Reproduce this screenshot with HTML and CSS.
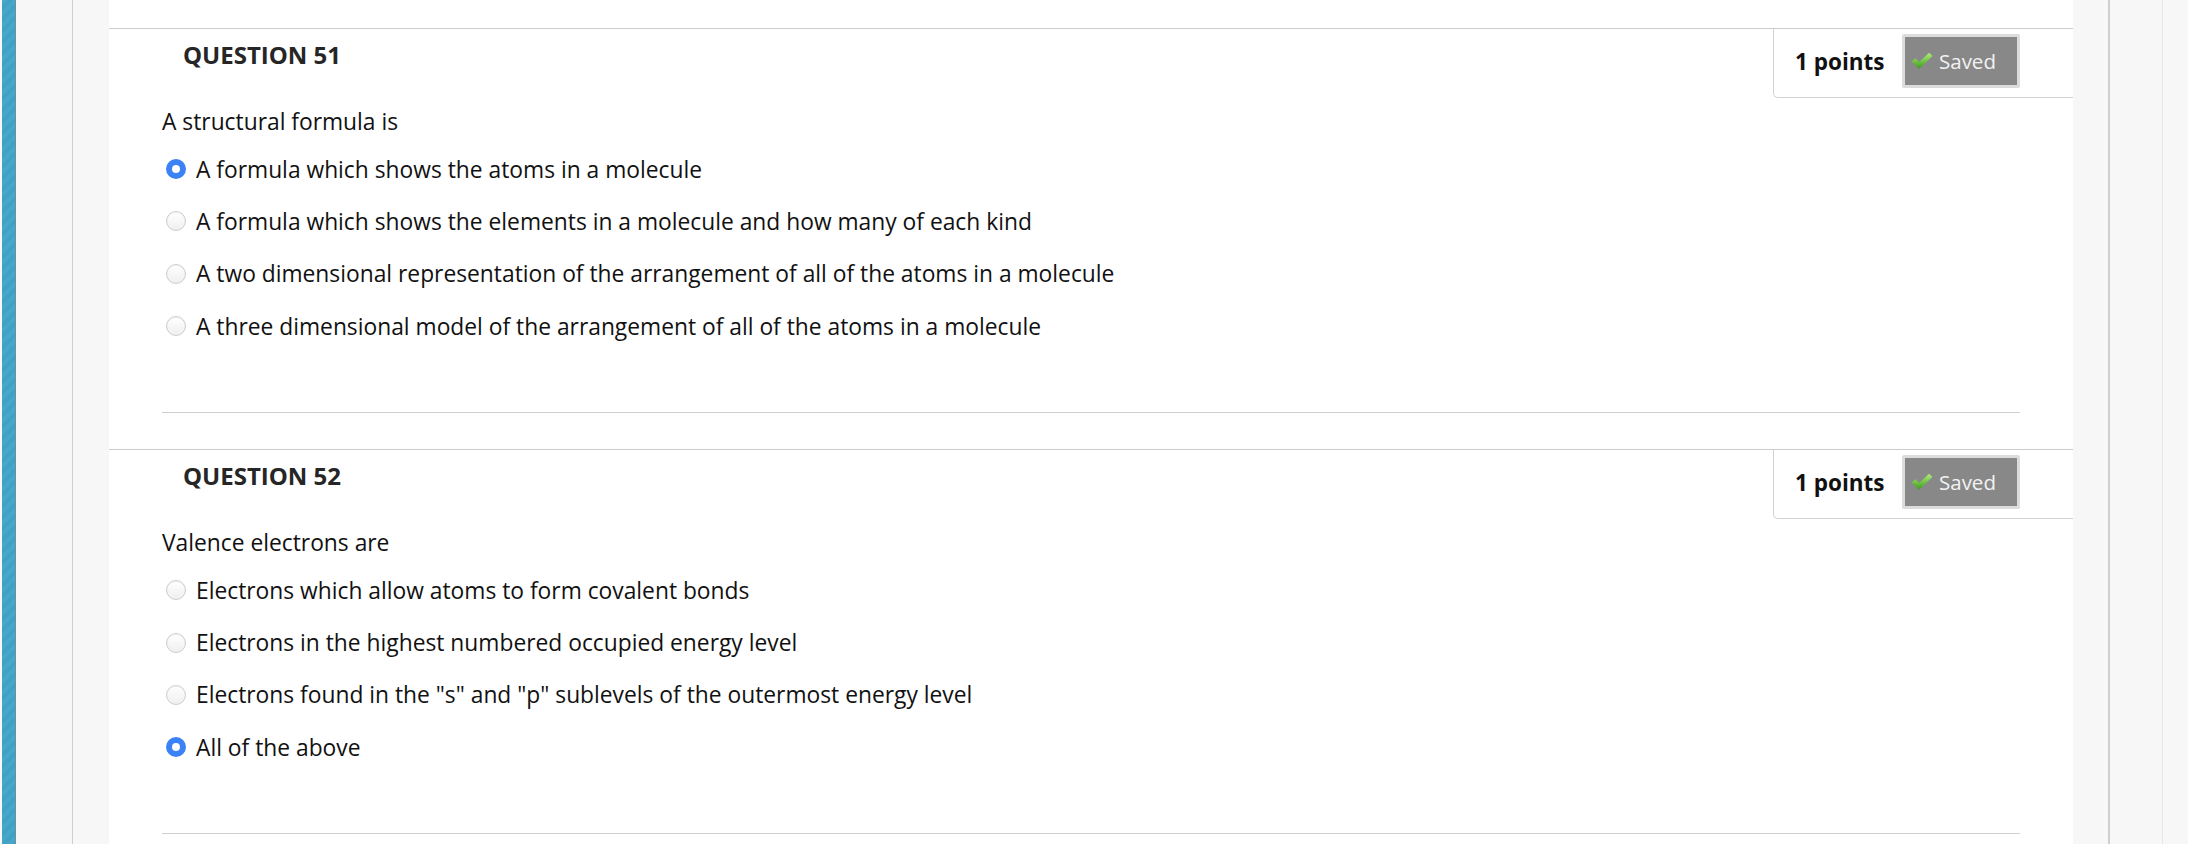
FILE: index.html
```html
<!DOCTYPE html>
<html lang="en">
<head>
<meta charset="utf-8">
<title>Questions</title>
<link rel="stylesheet" href="styles.css">
</head>
<body>
<div class="page">
  <div class="rail"></div>
  <div class="leftpane"><div class="lp-a"></div><div class="lp-b"></div></div>
  <main class="main">
    <section class="question">
      <div class="qhead">
        <h3 class="qtitle">QUESTION 51</h3>
        <div class="points">
          <span class="pts">1 points</span>
          <span class="saved"><svg class="check" viewBox="0 0 20 16" width="22" height="18"><defs><linearGradient id="g1" x1="0" y1="0" x2="0" y2="1"><stop offset="0" stop-color="#b0f07a"/><stop offset="1" stop-color="#3c9b19"/></linearGradient></defs><path d="M0.5 8.5 L4 5.5 L7.5 9 L16.5 0.5 L19.5 3.5 L7.5 15 Z" fill="url(#g1)"/></svg>Saved</span>
        </div>
      </div>
      <div class="qbody">
        <p class="qtext">A structural formula is</p>
        <ul class="options">
          <li class="opt"><span class="radio checked"></span>A formula which shows the atoms in a molecule</li>
          <li class="opt"><span class="radio"></span>A formula which shows the elements in a molecule and how many of each kind</li>
          <li class="opt"><span class="radio"></span>A two dimensional representation of the arrangement of all of the atoms in a molecule</li>
          <li class="opt"><span class="radio"></span>A three dimensional model of the arrangement of all of the atoms in a molecule</li>
        </ul>
        <hr class="sep">
      </div>
    </section>
    <section class="question">
      <div class="qhead">
        <h3 class="qtitle">QUESTION 52</h3>
        <div class="points">
          <span class="pts">1 points</span>
          <span class="saved"><svg class="check" viewBox="0 0 20 16" width="22" height="18"><defs><linearGradient id="g2" x1="0" y1="0" x2="0" y2="1"><stop offset="0" stop-color="#b0f07a"/><stop offset="1" stop-color="#3c9b19"/></linearGradient></defs><path d="M0.5 8.5 L4 5.5 L7.5 9 L16.5 0.5 L19.5 3.5 L7.5 15 Z" fill="url(#g2)"/></svg>Saved</span>
        </div>
      </div>
      <div class="qbody">
        <p class="qtext">Valence electrons are</p>
        <ul class="options">
          <li class="opt"><span class="radio"></span>Electrons which allow atoms to form covalent bonds</li>
          <li class="opt"><span class="radio"></span>Electrons in the highest numbered occupied energy level</li>
          <li class="opt"><span class="radio"></span>Electrons found in the "s" and "p" sublevels of the outermost energy level</li>
          <li class="opt"><span class="radio checked"></span>All of the above</li>
        </ul>
        <hr class="sep">
      </div>
    </section>
  </main>
  <div class="rightpane"><div class="rp-a"></div><div class="rp-b"></div><div class="rp-c"></div></div>
</div>
</body>
</html>
```

FILE: styles.css
```css
html, body {
  margin: 0;
  padding: 0;
  height: 100%;
  overflow: hidden;
}
body {
  font-family: "Open Sans", "Noto Sans", sans-serif;
  color: #111;
  background: #f7f7f7;
}
.page {
  display: flex;
  height: 844px;
  align-items: stretch;
}
.rail {
  width: 14px;
  margin-left: 2px;
  background:
    repeating-linear-gradient(135deg, rgba(255,255,255,0.025) 0 4px, rgba(0,0,0,0.025) 4px 8px),
    #42a5ca;
  border-right: 1px solid #6f8f9b;
  box-sizing: border-box;
}
.leftpane {
  width: 93px;
  display: flex;
  background: #f7f7f7;
}
.lp-a {
  width: 56px;
  border-right: 1px solid #cfcfcf;
}
.lp-b { flex: 1; }
.main {
  flex: 1;
  background: #fff;
  padding-top: 28px;
  min-width: 0;
}
.question {
  border-top: 1px solid #cccccc;
}
.qhead {
  display: flex;
  align-items: flex-start;
}
.qtitle {
  margin: 0;
  padding: 11px 0 0 74px;
  font-size: 24px;
  line-height: 30px;
  font-weight: 700;
  color: #262626;
}
.points {
  margin-left: auto;
  width: 300px;
  height: 69px;
  box-sizing: border-box;
  border-left: 1px solid #d2d2d2;
  border-bottom: 1px solid #d2d2d2;
  border-bottom-left-radius: 5px;
  display: flex;
  align-items: center;
  padding: 0 0 4px 21px;
}
.pts {
  font-size: 22.5px;
  font-weight: 700;
  color: #111;
  width: 107px;
}
.saved {
  display: flex;
  align-items: center;
  gap: 6px;
  width: 118px;
  height: 54px;
  box-sizing: border-box;
  border: 3px solid #dcdcdc;
  border-radius: 2px;
  background: #888888;
  color: #f2f2f2;
  font-size: 20.5px;
  padding-left: 6px;
}
.check { flex: none; }
.qbody {
  padding: 0 53px 36px;
}
.qtext {
  margin: 9px 0 0;
  font-size: 22.8px;
  line-height: 30px;
}
.options {
  list-style: none;
  margin: 17px 0 0;
  padding: 0;
}
.opt {
  display: flex;
  align-items: center;
  height: 30px;
  font-size: 22.8px;
  margin-bottom: 22.4px;
}
.opt:last-child { margin-bottom: 0; }
.radio {
  flex: none;
  width: 20px;
  height: 20px;
  border-radius: 50%;
  box-sizing: border-box;
  margin: 0 10px 0 4px;
  border: 1px solid #cdcdcd;
  background: linear-gradient(#ffffff, #efefef);
  box-shadow: inset 0 1px 1px rgba(0,0,0,0.05);
}
.radio.checked {
  border: 6px solid #3b82f6;
  background: #fff;
  box-shadow: none;
}
.sep {
  margin: 71px 0 0;
  border: 0;
  border-top: 1px solid #cfcfcf;
  height: 0;
}
.rightpane {
  width: 115px;
  display: flex;
  background: #f7f7f7;
}
.rp-a {
  width: 35px;
  border-right: 2px solid #cfcfcf;
}
.rp-b {
  width: 52px;
  border-right: 1px solid #e6e6e6;
}
.rp-c { flex: 1; }
```
